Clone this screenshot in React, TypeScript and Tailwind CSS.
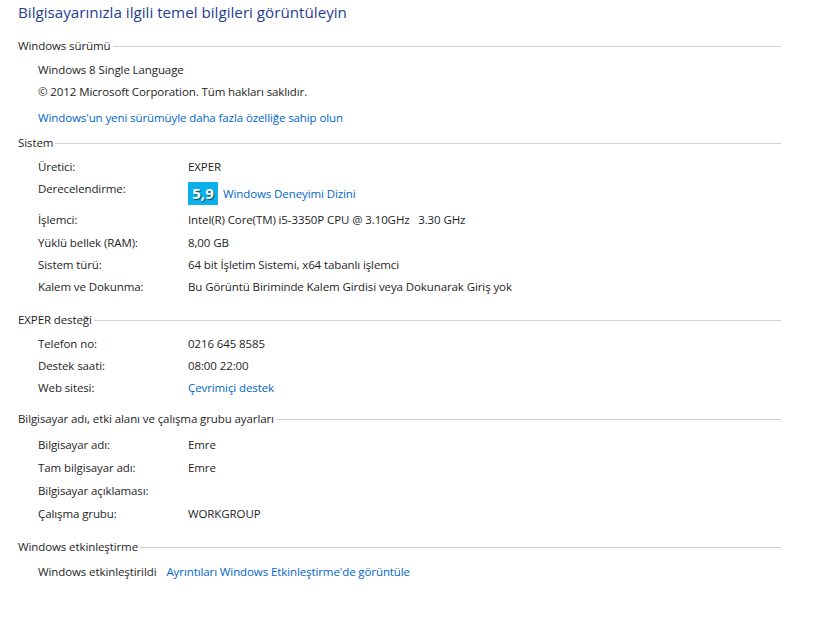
export default function App() {
  const font = { fontFamily: '"Open Sans", "Noto Sans", sans-serif' };
  return (
    <main className="w-[819px] h-[621px] bg-white text-[#1e1e1e] text-[11.5px] tracking-[-0.1px] pl-[18px]" style={font}>
      <h1 className="h-[25px] flex items-center text-[15.2px] tracking-normal text-[#1f3c95]">
        Bilgisayarınızla ilgili temel bilgileri görüntüleyin
      </h1>

      <Section title="Windows sürümü" className="mt-[11px]" />
      <div className="pl-5 mt-[3px]">
        <div className="h-[22px] flex items-center">Windows 8 Single Language</div>
        <div className="h-[22px] flex items-center">© 2012 Microsoft Corporation. Tüm hakları saklıdır.</div>
        <div className="h-[22px] flex items-center mt-[4px] text-[#0066cc]">
          Windows'un yeni sürümüyle daha fazla özelliğe sahip olun
        </div>
      </div>

      <Section title="Sistem" className="mt-[4px]" />
      <div className="pl-5 mt-[3px]">
        <Row label="Üretici:" value="EXPER" />
        <div className="h-[31px] grid grid-cols-[150px_1fr]">
          <div className="h-[22px] flex items-center">Derecelendirme:</div>
          <div className="flex items-center self-start mt-[4px] gap-[5px]">
            <span className="w-[30px] h-[23px] bg-[#0cb0ea] text-white font-bold text-[15px] tracking-normal flex items-center justify-center [text-shadow:1px_1px_1px_rgba(0,0,0,0.6)]">
              5,9
            </span>
            <span className="text-[#0066cc]">Windows Deneyimi Dizini</span>
          </div>
        </div>
        <Row label="İşlemci:" value="Intel(R) Core(TM) i5-3350P CPU @ 3.10GHz   3.30 GHz" />
        <Row label="Yüklü bellek (RAM):" value="8,00 GB" tall />
        <Row label="Sistem türü:" value="64 bit İşletim Sistemi, x64 tabanlı işlemci" />
        <Row label="Kalem ve Dokunma:" value="Bu Görüntü Biriminde Kalem Girdisi veya Dokunarak Giriş yok" />
      </div>

      <Section title="EXPER desteği" className="mt-[12px]" />
      <div className="pl-5 mt-[2px]">
        <Row label="Telefon no:" value="0216 645 8585" tall />
        <Row label="Destek saati:" value="08:00 22:00" />
        <Row label="Web sitesi:" value="Çevrimiçi destek" link />
      </div>

      <Section title="Bilgisayar adı, etki alanı ve çalışma grubu ayarları" className="mt-[10px]" />
      <div className="pl-5 mt-[4px]">
        <Row label="Bilgisayar adı:" value="Emre" tall />
        <Row label="Tam bilgisayar adı:" value="Emre" tall />
        <Row label="Bilgisayar açıklaması:" value="" tall />
        <Row label="Çalışma grubu:" value="WORKGROUP" tall />
      </div>

      <Section title="Windows etkinleştirme" className="mt-[12px]" />
      <div className="pl-5 mt-[4px] h-[22px] flex items-center gap-[10px]">
        <span>Windows etkinleştirildi</span>
        <span className="text-[#0066cc]">Ayrıntıları Windows Etkinleştirme'de görüntüle</span>
      </div>
    </main>
  );
}

function Section({ title, className }: { title: string; className?: string }) {
  return (
    <div className={"w-[763px] h-[20px] flex items-center " + (className ?? "")}>
      <span className="whitespace-nowrap">{title}</span>
      <div className="flex-1 h-px bg-[#d0d0d0] ml-[2px] mt-[1px]" />
    </div>
  );
}

function Row({ label, value, link, tall }: { label: string; value: string; link?: boolean; tall?: boolean }) {
  return (
    <div className={"grid grid-cols-[150px_1fr] items-center " + (tall ? "h-[23px]" : "h-[22px]")}>
      <span>{label}</span>
      <span className={"whitespace-pre " + (link ? "text-[#0066cc]" : "")}>{value}</span>
    </div>
  );
}
